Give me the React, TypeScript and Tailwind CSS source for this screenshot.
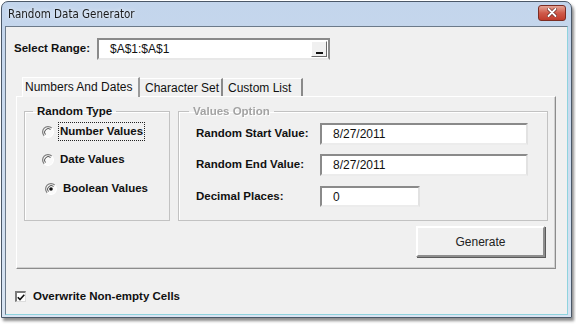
import { useState } from "react";

const font = "font-['Liberation_Sans',Arial,sans-serif]";

function Radio({ checked }: { checked?: boolean }) {
  return (
    <svg width="12" height="12" viewBox="0 0 12 12" className="shrink-0">
      <circle cx="6" cy="6" r="5" fill="#fafafa" />
      <path d="M9.8 2.2 A5.2 5.2 0 0 0 2.2 9.8" fill="none" stroke="#7a7a7a" strokeWidth="1.2" />
      <path d="M8.6 3.4 A3.7 3.7 0 0 0 3.4 8.6" fill="none" stroke="#3a3a3a" strokeWidth="0.9" />
      <path d="M2.2 9.8 A5.2 5.2 0 0 0 9.8 2.2" fill="none" stroke="#ffffff" strokeWidth="1.2" />
      {checked && <circle cx="6" cy="6" r="1.8" fill="#111" />}
    </svg>
  );
}

function TextBox({ value, className }: { value: string; className: string }) {
  return (
    <div
      className={`${className} flex items-center bg-white border-2 border-t-[#8a8a8a] border-l-[#8a8a8a] border-r-[#e2e2e2] border-b-[#ececec] pl-[11px] text-[12px] text-[#111]`}
    >
      {value}
    </div>
  );
}

export default function App() {
  const [choice, setChoice] = useState("boolean");
  const [overwrite, setOverwrite] = useState(true);

  const radios = [
    { id: "number", label: "Number Values", row: "mt-[4px] pl-[17px]", focus: true },
    { id: "date", label: "Date Values", row: "mt-[9px] pl-[17px]", focus: false },
    { id: "boolean", label: "Boolean Values", row: "mt-[10px] pl-[20px]", focus: false },
  ];

  return (
    <div className={`w-[576px] h-[324px] bg-white overflow-hidden ${font}`}>
      {/* Window frame */}
      <div className="ml-[1px] mt-[1px] w-[571px] h-[317px] flex flex-col rounded-t-[7px] border border-[#4b5868] bg-gradient-to-b from-[#c3d5ec] to-[#d8e4f2] shadow-[2px_3px_3px_rgba(0,0,0,0.45)]">
        {/* Title bar */}
        <div className="h-[24px] flex items-center justify-between pl-[6px] pr-[5px]">
          <span className="mt-[1px] text-[11.5px] text-[#1a1a1a] font-['DejaVu_Sans_Condensed','Liberation_Sans',sans-serif] drop-shadow-[0_0_2px_rgba(255,255,255,0.9)]">
            Random Data Generator
          </span>
          <div className="w-[28px] h-[16px] mt-[-3px] rounded-[3px] border border-[#7b2d24] bg-gradient-to-b from-[#e4a496] via-[#cf5a4a] to-[#c03c2c] flex items-center justify-center">
            <svg width="10" height="9" viewBox="0 0 10 9">
              <path d="M1.5 1 L8.5 8 M8.5 1 L1.5 8" stroke="#5a1a14" strokeWidth="3.2" strokeLinecap="round" />
              <path d="M1.5 1 L8.5 8 M8.5 1 L1.5 8" stroke="#ffffff" strokeWidth="2" strokeLinecap="round" />
            </svg>
          </div>
        </div>

        {/* Dialog body */}
        <div className="flex-1 ml-[3px] mr-[3px] mb-[2px] bg-[#f0f0f0] border border-[#6c7a8a] border-r-[#8fd3de] border-b-[#8fd3de] text-[#111]">
          {/* Select range */}
          <div className="mt-[11px] pl-[8px] flex items-center h-[22px]">
            <span className="w-[83px] text-[11.5px] font-bold">Select Range:</span>
            <div className="w-[233px] h-[22px] flex items-center justify-between bg-white border-2 border-t-[#8a8a8a] border-l-[#8a8a8a] border-r-[#8a8a8a] border-b-[#e8e8e8]">
              <span className="pl-[11px] text-[12px]">$A$1:$A$1</span>
              <div className="w-[16px] h-[16px] mr-[1px] bg-[#f0f0f0] border border-t-white border-l-white border-r-[#6a6a6a] border-b-[#6a6a6a] flex items-end justify-center pb-[2px]">
                <div className="w-[7px] h-[2px] bg-[#111]" />
              </div>
            </div>
          </div>

          {/* Tabs */}
          <div className="mt-[16px] ml-[10px] w-[540px]">
            <div className="h-[20px] flex items-end pl-[6px] text-[12px]">
              <div className="h-[20px] w-[118px] -mb-[1px] relative z-10 bg-[#f4f4f4] border-t border-l border-t-white border-l-white border-r-2 border-r-[#9a9a9a] pl-[2px]">
                Numbers And Dates
              </div>
              <div className="h-[18px] w-[83px] border-t border-t-white border-r-2 border-r-[#8a8a8a] pl-[5px]">
                Character Set
              </div>
              <div className="h-[18px] w-[80px] border-t border-t-white border-r-2 border-r-[#8a8a8a] pl-[5px]">
                Custom List
              </div>
            </div>

            <div className="h-[173px] border border-t-white border-l-white border-r-[#8c8c8c] border-b-[#8c8c8c] shadow-[inset_-1px_-1px_0_#d0d0d0]">
              <div className="mt-[7px] pl-[7px] flex gap-[8px]">
                {/* Random Type */}
                <fieldset className="w-[146px] h-[117px] border border-[#c2c2c2] shadow-[inset_1px_1px_0_#ffffff]">
                  <legend className="ml-[8px] px-[4px] h-[14px] leading-[14px] text-[11.5px] font-bold">Random Type</legend>
                  <div className="flex flex-col">
                    {radios.map((r) => (
                      <label
                        key={r.id}
                        className={`${r.row} h-[19px] flex items-center gap-[4px] cursor-pointer`}
                        onClick={() => setChoice(r.id)}
                      >
                        <Radio checked={choice === r.id} />
                        <span
                          className={`text-[11.5px] font-bold px-[1px] leading-[17px] ${
                            r.focus ? "border border-dotted border-[#222]" : "border border-transparent"
                          }`}
                        >
                          {r.label}
                        </span>
                      </label>
                    ))}
                  </div>
                </fieldset>

                {/* Values Option */}
                <fieldset className="w-[370px] h-[117px] border border-[#c2c2c2] shadow-[inset_1px_1px_0_#ffffff]">
                  <legend className="ml-[10px] px-[4px] h-[14px] leading-[14px] text-[11.5px] font-bold text-[#a3a3a3] drop-shadow-[1px_1px_0_#ffffff]">
                    Values Option
                  </legend>
                  <div className="flex flex-col pl-[17px]">
                    <div className="mt-[5px] flex items-center">
                      <span className="w-[124px] text-[11.5px] font-bold">Random Start Value:</span>
                      <TextBox value="8/27/2011" className="w-[208px] h-[22px]" />
                    </div>
                    <div className="mt-[9px] flex items-center">
                      <span className="w-[124px] text-[11.5px] font-bold">Random End Value:</span>
                      <TextBox value="8/27/2011" className="w-[208px] h-[22px]" />
                    </div>
                    <div className="mt-[10px] flex items-center">
                      <span className="w-[124px] text-[11.5px] font-bold">Decimal Places:</span>
                      <TextBox value="0" className="w-[100px] h-[21px]" />
                    </div>
                  </div>
                </fieldset>
              </div>

              <div className="mt-[5px] pr-[10px] flex justify-end">
                <button className="w-[129px] h-[31px] bg-[#f0f0f0] border-2 border-t-white border-l-white border-r-[#8e8e8e] border-b-[#8e8e8e] shadow-[1px_1px_0_#5a5a5a] text-[12px] text-[#222]">
                  Generate
                </button>
              </div>
            </div>
          </div>

          {/* Overwrite */}
          <label className="mt-[21px] ml-[9px] h-[13px] flex items-center gap-[7px] cursor-pointer" onClick={() => setOverwrite(!overwrite)}>
            <span className="w-[11px] h-[11px] bg-white border border-t-2 border-l-2 border-t-[#7a7a7a] border-l-[#7a7a7a] border-r-[#dcdcdc] border-b-[#dcdcdc] flex items-center justify-center">
              {overwrite && (
                <svg width="8" height="7" viewBox="0 0 8 7">
                  <path d="M0.8 3.2 L3 5.6 L7.3 0.8" fill="none" stroke="#111" strokeWidth="1.6" />
                </svg>
              )}
            </span>
            <span className="text-[11.5px] font-bold">Overwrite Non-empty Cells</span>
          </label>
        </div>
      </div>
    </div>
  );
}
